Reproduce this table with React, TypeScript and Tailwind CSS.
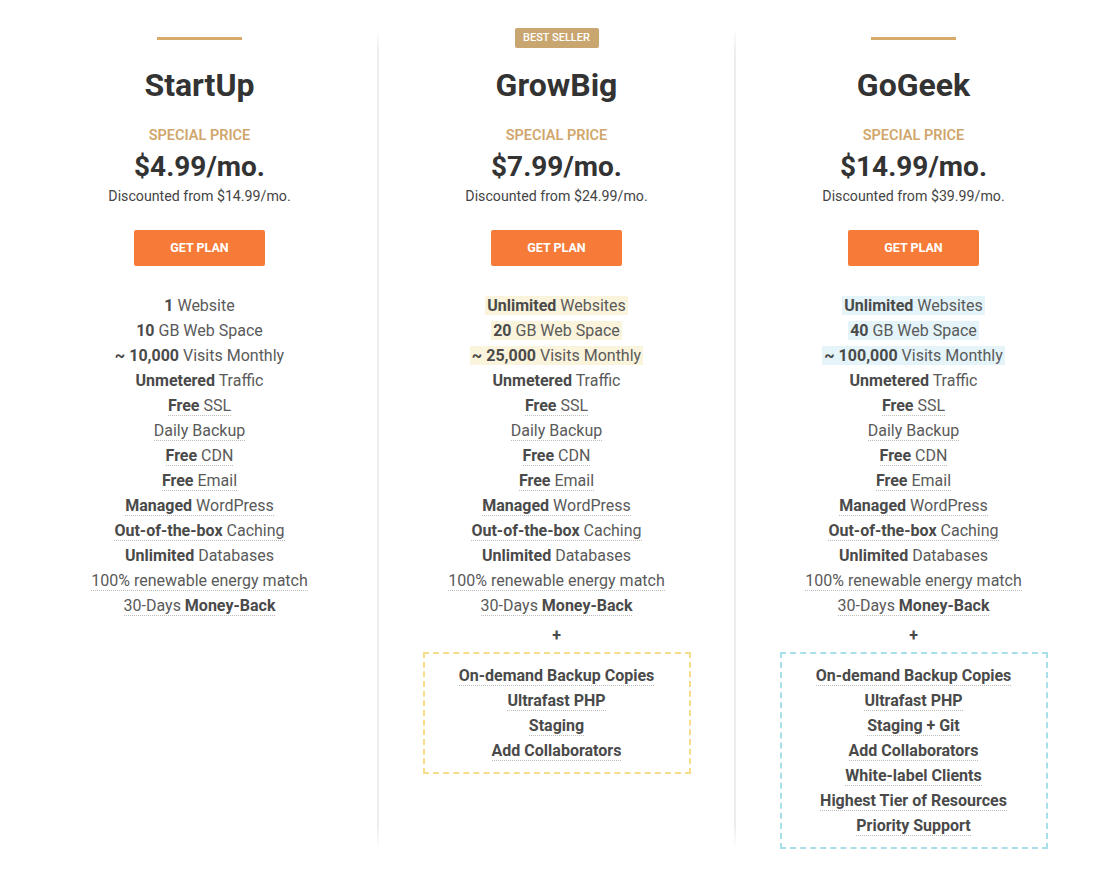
import React from "react"

type Feature = { bold?: string; text?: string; boldAfter?: string; line?: boolean; mark?: boolean }

interface Plan {
  name: string
  price: string
  from: string
  badge?: boolean
  mark?: string
  box?: string
  features: Feature[]
  extras?: string[]
}

const shared: Feature[] = [
  { bold: "Unmetered", text: " Traffic" },
  { bold: "Free", text: " SSL", line: true },
  { text: "Daily Backup", line: true },
  { bold: "Free", text: " CDN", line: true },
  { bold: "Free", text: " Email", line: true },
  { bold: "Managed", text: " WordPress", line: true },
  { bold: "Out-of-the-box", text: " Caching", line: true },
  { bold: "Unlimited", text: " Databases" },
  { text: "100% renewable energy match", line: true },
  { text: "30-Days ", boldAfter: "Money-Back", line: true },
]

const plans: Plan[] = [
  {
    name: "StartUp",
    price: "$4.99/mo.",
    from: "Discounted from $14.99/mo.",
    features: [
      { bold: "1", text: " Website" },
      { bold: "10", text: " GB Web Space" },
      { bold: "~ 10,000", text: " Visits Monthly" },
      ...shared,
    ],
  },
  {
    name: "GrowBig",
    price: "$7.99/mo.",
    from: "Discounted from $24.99/mo.",
    badge: true,
    mark: "bg-[#faf4dc]",
    box: "border-[#f7dc8a]",
    features: [
      { bold: "Unlimited", text: " Websites", mark: true },
      { bold: "20", text: " GB Web Space", mark: true },
      { bold: "~ 25,000", text: " Visits Monthly", mark: true },
      ...shared,
    ],
    extras: ["On-demand Backup Copies", "Ultrafast PHP", "Staging", "Add Collaborators"],
  },
  {
    name: "GoGeek",
    price: "$14.99/mo.",
    from: "Discounted from $39.99/mo.",
    mark: "bg-[#e4f4f9]",
    box: "border-[#a8e0ea]",
    features: [
      { bold: "Unlimited", text: " Websites", mark: true },
      { bold: "40", text: " GB Web Space", mark: true },
      { bold: "~ 100,000", text: " Visits Monthly", mark: true },
      ...shared,
    ],
    extras: [
      "On-demand Backup Copies",
      "Ultrafast PHP",
      "Staging + Git",
      "Add Collaborators",
      "White-label Clients",
      "Highest Tier of Resources",
      "Priority Support",
    ],
  },
]

function Divider() {
  return (
    <div className="w-[2px] self-stretch bg-[linear-gradient(to_bottom,transparent,#ededed_24px,#ededed_calc(100%-24px),transparent)]" />
  )
}

function PlanColumn({ plan }: { plan: Plan }) {
  return (
    <div className="flex w-[355px] flex-col items-center">
      {/* Top accent */}
      <div className="flex h-[20px] items-center">
        {plan.badge ? (
          <span className="flex h-[20px] w-[84px] items-center justify-center rounded-[2px] bg-[#c9a66f] text-[11px] font-medium text-white">
            BEST SELLER
          </span>
        ) : (
          <span className="block h-[3px] w-[85px] bg-[#d8ab6a]" />
        )}
      </div>

      <h2 className="mt-[18px] text-[32px] font-bold leading-[38px] text-[#333]">{plan.name}</h2>
      <p className="mt-[22px] text-[14.5px] font-semibold leading-[20px] text-[#d0a66c]">SPECIAL PRICE</p>
      <p className="mt-[4px] text-[28px] font-bold leading-[34px] text-[#333]">{plan.price}</p>
      <p className="mt-[2px] text-[14.2px] leading-[20px] text-[#444]">{plan.from}</p>

      <button className="mt-[24px] h-[36px] w-[131px] rounded-[2px] bg-[#f67b39] text-[12.5px] font-bold text-white">
        GET PLAN
      </button>

      <ul className="mt-[27px] flex flex-col items-center text-[16px] leading-[25px] text-[#5a5a5a]">
        {plan.features.map((f, i) => (
          <li key={i}>
            <span
              className={`${f.line ? "border-b border-dotted border-[#bdbdbd]" : ""} ${
                f.mark ? `${plan.mark} px-[2px]` : ""
              }`}
            >
              {f.bold && <b className="font-bold text-[#4a4a4a]">{f.bold}</b>}
              {f.text}
              {f.boldAfter && <b className="font-bold text-[#4a4a4a]">{f.boldAfter}</b>}
            </span>
          </li>
        ))}
      </ul>

      {plan.extras && (
        <>
          <p className="mt-[5px] text-[16px] font-bold leading-[25px] text-[#4a4a4a]">+</p>
          <ul
            className={`mt-[4px] flex w-[268px] flex-col items-center border-2 border-dashed py-[9px] text-[16px] font-bold leading-[25px] text-[#4a4a4a] ${plan.box}`}
          >
            {plan.extras.map((e) => (
              <li key={e}>
                <span className="border-b border-dotted border-[#bdbdbd]">{e}</span>
              </li>
            ))}
          </ul>
        </>
      )}
    </div>
  )
}

export default function App() {
  return (
    <div className="min-h-[869px] bg-white font-['Roboto',sans-serif]">
      <div className="ml-[22px] flex pt-[28px] pb-[18px]">
        <PlanColumn plan={plans[0]} />
        <Divider />
        <PlanColumn plan={plans[1]} />
        <Divider />
        <PlanColumn plan={plans[2]} />
      </div>
    </div>
  )
}
